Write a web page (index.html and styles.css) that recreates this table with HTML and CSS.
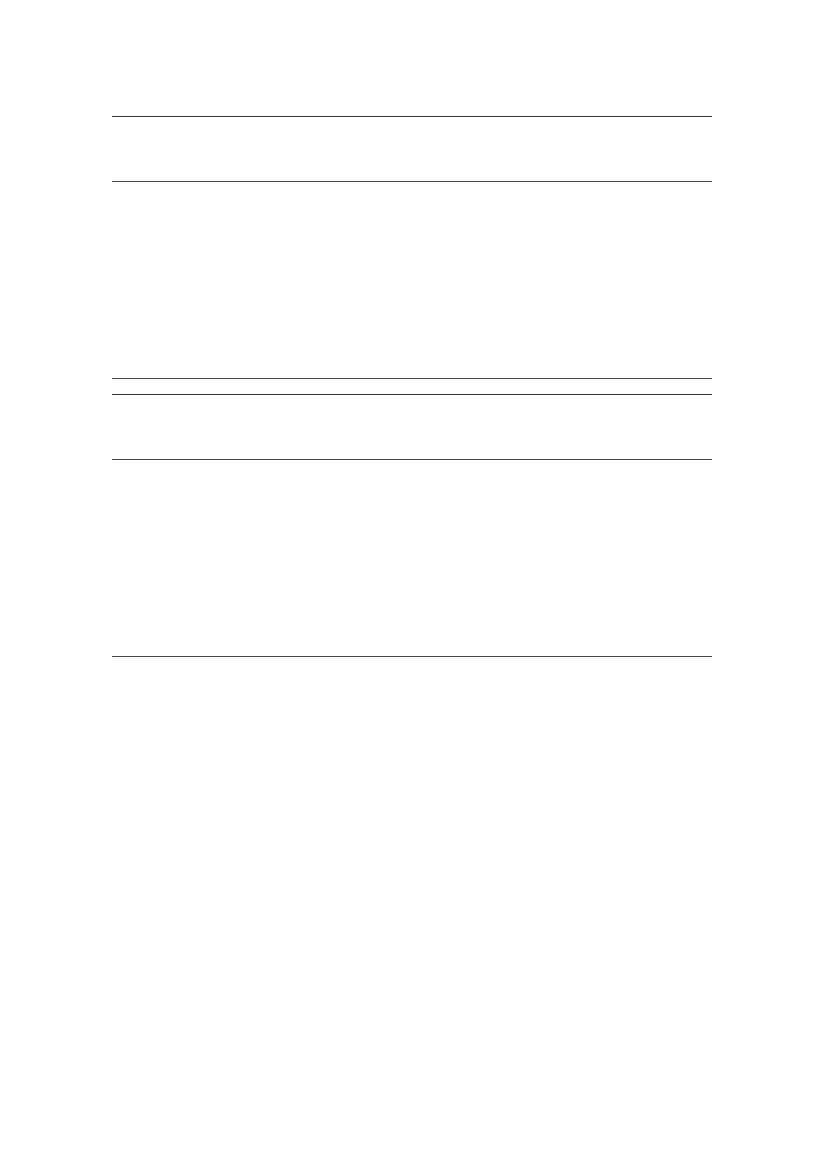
FILE: index.html
```html
<!DOCTYPE html>
<html lang="en">
<head>
<meta charset="utf-8">
<title>Tables</title>
<link rel="stylesheet" href="styles.css">
</head>
<body>
<main class="page">
  <section class="tbl">
    <div class="row head">
      <div class="cell first"></div><div class="cell"></div><div class="cell"></div><div class="cell"></div><div class="cell"></div><div class="cell"></div><div class="cell"></div>
    </div>
    <div class="row body">
      <div class="cell first"></div><div class="cell"></div><div class="cell"></div><div class="cell"></div><div class="cell"></div><div class="cell"></div><div class="cell"></div>
    </div>
  </section>
  <section class="tbl">
    <div class="row head">
      <div class="cell first"></div><div class="cell"></div><div class="cell"></div><div class="cell"></div><div class="cell"></div><div class="cell"></div><div class="cell"></div>
    </div>
    <div class="row body">
      <div class="cell first"></div><div class="cell"></div><div class="cell"></div><div class="cell"></div><div class="cell"></div><div class="cell"></div><div class="cell"></div>
    </div>
  </section>
</main>
</body>
</html>
```
FILE: styles.css
```css
html {
  overflow: hidden;
  scrollbar-width: none;
}
::-webkit-scrollbar {
  width: 0;
  height: 0;
  display: none;
}
html, body {
  margin: 0;
  padding: 0;
  background: #ffffff;
  font-family: "Liberation Serif", serif;
}
.page {
  padding-top: 116px;
  display: flex;
  flex-direction: column;
  gap: 15px;
}
.tbl {
  margin-left: 112px;
  width: 600px;
  border-top: 1px solid #333333;
}
.row {
  display: grid;
  grid-template-columns: 296px repeat(6, 1fr);
  border-bottom: 1px solid #444444;
}
.head {
  height: 64px;
}
.body {
  height: 196px;
}
```
